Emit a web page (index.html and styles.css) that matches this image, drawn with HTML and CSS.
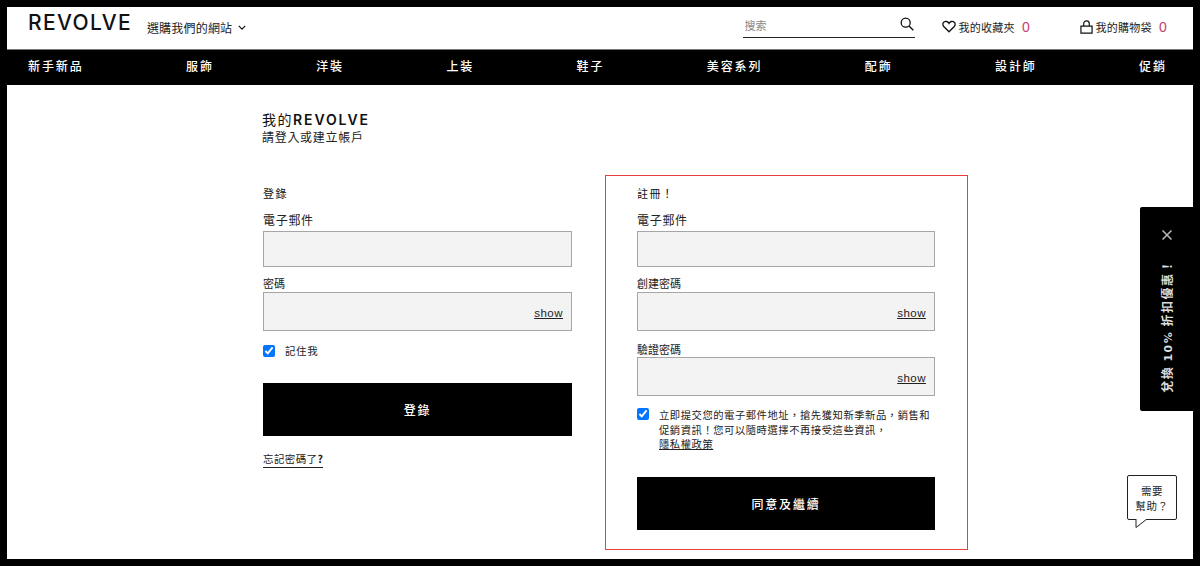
FILE: index.html
```html
<!DOCTYPE html>
<html lang="zh-Hant">
<head>
<meta charset="utf-8">
<title>REVOLVE</title>
<link rel="stylesheet" href="styles.css">
</head>
<body>
<div class="frame">
  <header class="topbar">
    <div class="brand-group">
      <span class="logo">REVOLVE</span>
      <span class="site-pick">選購我們的網站
        <svg class="chev" viewBox="0 0 10 6" width="8" height="5"><path d="M1 1l4 4 4-4" fill="none" stroke="#111" stroke-width="1.5"/></svg>
      </span>
    </div>
    <div class="tools">
      <div class="search">
        <span class="search-ph">搜索</span>
        <svg viewBox="0 0 14 14" width="14" height="14"><circle cx="5.7" cy="5.7" r="4.5" fill="none" stroke="#111" stroke-width="1.3"/><path d="M9 9l4.3 4.3" stroke="#111" stroke-width="1.4"/></svg>
      </div>
      <div class="tool fav">
        <svg viewBox="0 0 16 14" width="14" height="13"><path d="M8 13L2 7C.4 5.3.7 2.9 2.3 1.8 4 .7 6.6 1 8 3.4 9.4 1 12 .7 13.7 1.8 15.3 2.9 15.6 5.3 14 7z" fill="none" stroke="#111" stroke-width="1.5"/></svg>
        <span class="tool-label">我的收藏夾</span><span class="count">0</span>
      </div>
      <div class="tool bag">
        <svg viewBox="0 0 14 15" width="13" height="14"><path d="M1 14V6.5H13V14z" fill="none" stroke="#111" stroke-width="1.3"/><path d="M4 6.5V4C4 2 5.2 1 7 1s3 1 3 3v2.5" fill="none" stroke="#111" stroke-width="1.3"/></svg>
        <span class="tool-label">我的購物袋</span><span class="count">0</span>
      </div>
    </div>
  </header>
  <nav class="mainnav">
    <a>新手新品</a><a>服飾</a><a>洋裝</a><a>上装</a><a>鞋子</a><a>美容系列</a><a>配飾</a><a>設計師</a><a>促銷</a>
  </nav>
  <main class="content">
    <div class="container">
      <h1 class="title">我的<b>REVOLVE</b></h1>
      <p class="subtitle">請登入或建立帳戶</p>
      <div class="columns">
        <section class="login">
          <h2 class="form-title">登錄</h2>
          <label class="label-lg">電子郵件</label>
          <div class="field"></div>
          <label class="label">密碼</label>
          <div class="field pw"><a class="show">show</a></div>
          <div class="check-row">
            <input type="checkbox" checked>
            <span>記住我</span>
          </div>
          <button class="cta">登錄</button>
          <a class="forgot">忘記密碼了<b>?</b></a>
        </section>
        <section class="register">
          <h2 class="form-title">註冊！</h2>
          <label class="label-lg">電子郵件</label>
          <div class="field"></div>
          <label class="label">創建密碼</label>
          <div class="field pw"><a class="show">show</a></div>
          <label class="label">驗證密碼</label>
          <div class="field pw"><a class="show">show</a></div>
          <div class="consent">
            <input type="checkbox" checked>
            <p>立即提交您的電子郵件地址，搶先獲知新季新品，銷售和促銷資訊！您可以隨時選擇不再接受這些資訊，<br><a>隱私權政策</a></p>
          </div>
          <button class="cta">同意及繼續</button>
        </section>
      </div>
    </div>
  </main>
  <aside class="promo">
    <svg class="promo-close" viewBox="0 0 10 10" width="10" height="10"><path d="M.5.5l9 9M9.5.5l-9 9" stroke="#bbb" stroke-width="1.5"/></svg>
    <span class="promo-text">兌換 <b>10%</b> 折扣優惠！</span>
  </aside>
  <aside class="help">
    <span>需要<br>幫助？</span>
    <svg class="help-tail" viewBox="0 0 14 10" width="14" height="10"><path d="M1 0V8.5L12 0" fill="#fff" stroke="#222" stroke-width="1"/></svg>
  </aside>
</div>
</body>
</html>
```
FILE: styles.css
```css
* { box-sizing: border-box; }
html, body { margin: 0; height: 100%; overflow: hidden; background: #000; }
body { font-family: "Noto Sans CJK TC", "Liberation Sans", sans-serif; color: #222; }
.frame { position: relative; height: 566px; padding: 7px; }
.topbar { height: 43px; background: #fff; display: flex; justify-content: space-between; align-items: center; padding: 0 176px 3px 21px; border-bottom: 1px solid #777; }
.brand-group { display: flex; align-items: center; gap: 15px; height: 28px; }
.logo { font-family: Inter, "Liberation Sans", sans-serif; font-size: 21px; letter-spacing: 1.35px; color: #111; line-height: 20px; font-weight: 500; align-self: flex-start; }
.site-pick { font-size: 12px; letter-spacing: .2px; margin-top: 1px; display: flex; align-items: center; gap: 6px; }
.tools { display: flex; align-items: center; }
.search { width: 172px; height: 22px; margin-top: 1px; padding: 1px 1px 0; border-bottom: 1px solid #222; display: flex; justify-content: space-between; font-size: 11px; color: #888; line-height: 14px; }
.search-ph { margin-top: 1px; }
.tool { display: flex; align-items: center; font-size: 11px; letter-spacing: .3px; }
.fav { margin-left: 27px; width: 138px; gap: 2px; }
.bag { gap: 2px; margin-right: -150px; }
.count { color: #c8406f; font-size: 14px; line-height: 14px; margin-left: 5px; font-family: "Liberation Sans", sans-serif; }
.mainnav { height: 35px; background: #000; display: flex; justify-content: space-between; align-items: center; padding: 0 26px 5px 21px; }
.mainnav a { color: #fff; font-size: 12px; font-weight: 500; letter-spacing: 1.9px; }
.content { background: #fff; height: 474px; padding-left: 255px; }
.container { width: 720px; padding-top: 24px; }
.title { margin: 0; font-size: 14px; font-weight: 400; line-height: 20px; letter-spacing: 1.5px; color: #111; }
.title b { font-family: Inter, sans-serif; font-weight: 600; letter-spacing: 1.9px; }
.subtitle { margin: 0; font-size: 12px; line-height: 16px; letter-spacing: .7px; margin-top: -1px; }
.columns { display: flex; align-items: flex-start; margin-top: 30px; gap: 33px; }
.login { width: 310px; padding-top: 10px; padding-left: 1px; }
.register { width: 363px; height: 375px; border: 1px solid #e8413d; padding: 9px 32px 0 31px; }
.form-title { margin: 0; font-size: 11px; font-weight: 400; letter-spacing: 1.4px; line-height: 16px; color: #111; }
.label-lg { display: block; margin-top: 11px; font-size: 12px; line-height: 16px; letter-spacing: .7px; }
.label { display: block; margin-top: 8px; font-size: 11px; line-height: 16px; }
.field { height: 36px; margin-top: 3px; background: #f3f3f3; border: 1px solid #a6a6a6; position: relative; }
.field.pw { height: 39px; margin-top: 1px; }
.field.pw + .label { margin-top: 10px; }
.field.pw + .label + .field.pw { margin-top: 0; }
.show { position: absolute; right: 8px; bottom: 10px; font-family: "Liberation Sans", sans-serif; font-size: 11.5px; line-height: 13px; letter-spacing: .5px; text-decoration: underline; color: #222; }
.check-row { display: flex; align-items: center; margin-top: 13px; font-size: 10.5px; letter-spacing: .6px; gap: 10px; height: 14px; }
.check-row span { margin-top: -1px; }
input[type=checkbox] { width: 12px; height: 12px; margin: 0; accent-color: #0075ff; flex: none; }
.cta { display: block; width: 100%; height: 53px; border: 0; background: #000; color: #fff; font-family: inherit; font-size: 12px; font-weight: 500; letter-spacing: 1.8px; }
.login .cta { margin-top: 25px; width: 309px; }
.forgot { display: inline-block; margin-top: 14px; font-size: 10.5px; line-height: 17px; border-bottom: 1px solid #222; letter-spacing: .4px; }
.consent { display: flex; gap: 10px; margin-top: 12px; }
.consent p { margin: 0; font-size: 10.3px; line-height: 14.5px; letter-spacing: .55px; }
.consent a { text-decoration: underline; }
.register .cta { margin-top: 25px; }
.promo { position: absolute; left: 1140px; top: 207px; width: 53px; height: 204px; background: #000; border-radius: 2px 0 0 2px; color: #fff; display: flex; flex-direction: column; align-items: center; padding-top: 23px; }
.promo-close { flex: none; }
.promo-text { writing-mode: vertical-rl; text-orientation: sideways; transform: rotate(180deg); font-size: 12px; font-weight: 700; letter-spacing: 1.5px; margin-top: 19px; color: #dcdcdc; white-space: nowrap; }
.promo-text b { font-family: "DejaVu Sans", sans-serif; font-weight: 700; font-size: 11px; }
.help { position: absolute; left: 1127px; top: 475px; width: 50px; height: 45px; border: 1px solid #222; border-radius: 2px; background: #fff; font-size: 10.5px; line-height: 15px; text-align: center; padding-top: 7px; letter-spacing: .6px; }
.help-tail { position: absolute; left: 7px; bottom: -10px; }
```
